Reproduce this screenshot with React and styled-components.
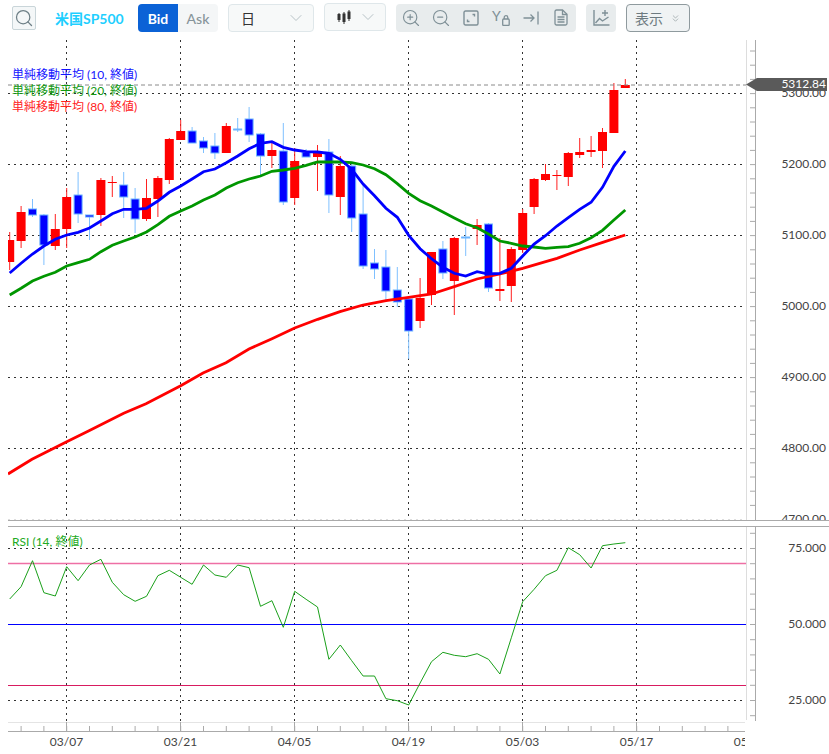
import React from 'react';
import styled, { createGlobalStyle } from 'styled-components';
import { Search, ZoomIn, ZoomOut, ChevronDown, ChevronsDown } from 'lucide-react';

const GlobalStyle = createGlobalStyle`
  html, body {
    margin: 0;
    padding: 0;
    background: #fff;
  }
  body {
    font-family: Lato, "Noto Sans CJK JP", sans-serif;
  }
`;

const Page = styled.div`
  width: 829px;
  height: 754px;
  overflow: hidden;
  background: #fff;
`;

const Toolbar = styled.div`
  display: flex;
  align-items: center;
  gap: 10px;
  height: 36px;
  margin-bottom: 4px;
  padding-left: 12px;
`;

const SearchButton = styled.button`
  display: flex;
  align-items: center;
  justify-content: center;
  width: 24px;
  height: 24px;
  padding: 0;
  border: 1px solid #c9d5d9;
  border-radius: 2px;
  background: #f4f7f8;
  color: #6d7f86;
`;

const Title = styled.div`
  width: 69px;
  margin: 0 4px 0 9px;
  font-size: 14px;
  font-weight: 700;
  color: #1fcfff;
  white-space: nowrap;
`;

const Segment = styled.div`
  display: flex;
  height: 28px;
  border-radius: 4px;
  overflow: hidden;
`;

const SegmentItem = styled.div`
  display: flex;
  align-items: center;
  justify-content: center;
  width: 40px;
  font-size: 14px;
  font-weight: ${(p) => (p.$active ? 700 : 500)};
  background: ${(p) => (p.$active ? '#0b62d6' : '#f4f6f7')};
  color: ${(p) => (p.$active ? '#fff' : '#87949a')};
`;

const Select = styled.div`
  display: flex;
  align-items: center;
  justify-content: space-between;
  box-sizing: border-box;
  width: ${(p) => p.$width}px;
  height: 28px;
  margin-top: ${(p) => p.$lift || 0}px;
  padding: 0 7px 0 12px;
  border: 1px solid #dfe7ea;
  border-radius: 4px;
  background: #f7f9f9;
  color: #b8c3c7;
`;

const SelectText = styled.span`
  font-size: 14px;
  color: #333;
`;

const IconGroup = styled.div`
  display: grid;
  grid-template-columns: repeat(${(p) => p.$count}, 30px);
  height: 28px;
  border-radius: 4px;
  background: #e8eced;
  color: #7f9097;
`;

const IconCell = styled.div`
  display: flex;
  align-items: center;
  justify-content: center;
  padding-bottom: 1px;
`;

const YLock = styled.div`
  display: flex;
  align-items: flex-start;
  justify-content: space-between;
  width: 18px;
  height: 16px;
`;

const YMark = styled.span`
  font-size: 14px;
  line-height: 11px;
`;

const LockSvg = styled.svg`
  align-self: flex-end;
  width: 8px;
  height: 11px;
`;

const ShowButton = styled.button`
  display: flex;
  align-items: center;
  gap: 7px;
  box-sizing: border-box;
  width: 64px;
  height: 28px;
  padding: 0 0 0 8px;
  border: 1px solid #8f9a9e;
  border-radius: 4px;
  background: #f0f3f4;
  font-family: Lato, "Noto Sans CJK JP", sans-serif;
  font-size: 14px;
  color: #6d7a80;
`;

const ChartWrap = styled.div`
  position: relative;
  width: 829px;
  height: 714px;
`;

const ChartSvg = styled.svg`
  display: block;
  width: 829px;
  height: 714px;
`;

const AxisLabel = styled.text`
  font-family: Lato, sans-serif;
  font-size: 12px;
  fill: ${(p) => p.$fill || '#444'};
  text-anchor: ${(p) => p.$anchor || 'end'};
`;

const Legend = styled.div`
  position: absolute;
  left: 12px;
  top: ${(p) => p.$top}px;
  display: flex;
  flex-direction: column;
  font-size: 12px;
  line-height: 16px;
`;

const LegendItem = styled.span`
  color: ${(p) => p.$color};
  white-space: nowrap;
`;

// [up, high, bodyTop, bodyBottom, low]
const candles = [
  [1, 232, 240, 262, 270], [1, 206, 212, 241, 248], [0, 199, 209, 215, 217], [0, 214, 215, 245, 265],
  [1, 214, 229, 246, 250], [1, 188, 197, 229, 248], [0, 172, 195, 214, 223], [0, 215, 215, 217, 240],
  [1, 178, 180, 215, 226], [1, 176, 182, 183, 197], [0, 172, 185, 197, 218], [0, 188, 199, 219, 233],
  [1, 179, 198, 219, 221], [1, 176, 178, 199, 217], [1, 138, 139, 180, 184], [1, 120, 131, 140, 140],
  [0, 127, 131, 143, 143], [0, 137, 141, 148, 153], [0, 133, 146, 153, 159], [1, 123, 126, 153, 153],
  [0, 118, 129, 130, 132], [0, 107, 119, 135, 142], [0, 133, 134, 156, 175], [1, 143, 150, 156, 168],
  [0, 123, 151, 202, 205], [1, 148, 161, 198, 205], [0, 149, 152, 157, 157], [1, 145, 151, 157, 191],
  [0, 139, 152, 195, 213], [1, 156, 166, 197, 215], [0, 163, 166, 218, 232], [0, 183, 214, 266, 269],
  [0, 249, 263, 269, 279], [0, 250, 267, 291, 300], [0, 267, 290, 302, 307], [0, 297, 299, 331, 359],
  [1, 278, 298, 321, 328], [1, 252, 252, 295, 305], [0, 241, 249, 273, 279], [1, 237, 238, 281, 315],
  [0, 227, 237, 238, 256], [1, 219, 225, 229, 245], [0, 223, 224, 288, 292], [1, 238, 289, 291, 301],
  [1, 247, 249, 286, 302], [1, 209, 213, 250, 253], [1, 178, 179, 207, 214], [1, 164, 174, 180, 181],
  [1, 170, 175, 176, 190], [1, 152, 153, 177, 186], [1, 138, 152, 155, 158], [1, 136, 150, 152, 157],
  [1, 128, 132, 151, 168], [1, 83, 90, 133, 133], [1, 79, 85, 88, 88],
];

const ma10 = [
  273, 263.3, 254, 246, 239.3, 235, 232.3, 228, 221, 213.7, 209.3, 209.3, 208.3, 201, 192.3, 186, 179, 171.7, 169,
  162.7, 156, 148.7, 143.3, 141.7, 147.3, 150, 151.7, 152, 153.3, 159.3, 169.3, 184, 195.7, 208.3, 217.3, 235.3,
  248.7, 258.7, 267.3, 273.3, 276, 271.7, 274, 273.3, 268.3, 256, 244, 235.7, 226, 217.7, 209.3, 202.3, 187.3, 166.3, 151,
];

const ma20 = [
  295, 288.3, 281, 276.3, 272.3, 266, 262.7, 259.3, 251.7, 245.3, 241, 237, 232, 224.7, 216.3, 211, 206, 200, 195,
  188, 182.7, 179, 176, 171.3, 170, 168.3, 165.3, 162, 162, 162, 162.7, 165, 168.7, 174.7, 183.7, 193.3, 200.7, 206,
  212, 218, 223.7, 227.7, 234, 241, 243.3, 246, 247, 248.3, 247.3, 246.7, 243.3, 237.7, 230.3, 220, 210,
];

const ma80 = [
  [8, 474], [32, 459.3], [66.7, 441.7], [89, 430.7], [123.7, 413.3], [146, 403.7], [180.7, 385.7], [203, 373],
  [226, 362.7], [249, 349], [272, 338.7], [294.7, 328], [317.7, 319.3], [340, 311.7], [363, 305], [386, 300.7],
  [408.7, 297.3], [431.7, 294], [454.3, 286.7], [477, 279], [500, 274], [522.7, 268.3], [545.7, 261.7], [557, 258.3],
  [579.7, 250], [602.7, 242.3], [625.3, 235],
];

const rsi = [
  599, 586.7, 560.7, 592.7, 596, 566.7, 580.7, 565, 559.3, 582.3, 594.7, 601.3, 596.3, 575.7, 570.3, 577.3, 584.3,
  565, 575, 577.3, 565, 567.7, 606.3, 600.7, 627.3, 591.3, 599.3, 607, 659.3, 645, 660.7, 676, 676, 698.7, 700.7, 705,
  683, 661.7, 652.3, 655.3, 656.7, 653.7, 659.3, 674, 637.8, 601.7, 589.3, 575.7, 570.3, 547.7, 554.7, 568, 545.7, 544, 542.7,
];

const barX = (i) => 9.7 + 11.4 * i;
const toPoints = (ys) => ys.map((y, i) => `${barX(i)},${y}`).join(' ');

const range = (start, end, step) => {
  const out = [];
  for (let v = start; v <= end; v += step) out.push(v);
  return out;
};

const priceGrid = [
  { y: 93.5, label: '5300.00' },
  { y: 164.5, label: '5200.00' },
  { y: 235.5, label: '5100.00' },
  { y: 306.5, label: '5000.00' },
  { y: 377.5, label: '4900.00' },
  { y: 448.5, label: '4800.00' },
  { y: 519.5, label: '4700.00', faint: true },
];

const rsiGrid = [548.5, 700.5];

const dates = [
  { x: 66.5, label: '03/07' },
  { x: 180.5, label: '03/21' },
  { x: 294.5, label: '04/05' },
  { x: 408.5, label: '04/19' },
  { x: 522.5, label: '05/03' },
  { x: 636.5, label: '05/17' },
  { x: 750.5, label: '05/31' },
];

const Candle = ({ data, index }) => {
  const [up, high, top, bottom, low] = data;
  const x = barX(index);
  if (up) {
    return (
      <g>
        <line x1={x} x2={x} y1={high} y2={low} stroke="#ff2020" strokeWidth="1" />
        <rect x={x - 4.5} y={top} width="9" height={bottom - top} fill="#ff0000" />
      </g>
    );
  }
  return (
    <g>
      <line x1={x} x2={x} y1={high} y2={low} stroke="#7fc0ff" strokeWidth="1" />
      <rect x={x - 4} y={top} width="8" height={bottom - top} fill="#0000ff" stroke="#6db6ff" strokeWidth="1" />
    </g>
  );
};

const CandleIcon = () => (
  <svg width="14" height="16" viewBox="0 0 14 16" fill="#333" stroke="#333" strokeWidth="1">
    <line x1="2" y1="4" x2="2" y2="13" />
    <rect x="1" y="5.5" width="2" height="5" />
    <line x1="7" y1="3" x2="7" y2="15" />
    <rect x="6" y="5" width="2" height="7.5" />
    <line x1="12" y1="1" x2="12" y2="12" />
    <rect x="11" y="3" width="2" height="6.5" />
  </svg>
);

const FitIcon = () => (
  <svg width="16" height="16" viewBox="0 0 16 16" fill="none" stroke="currentColor" strokeWidth="1.4">
    <rect x="1" y="1" width="14" height="14" rx="1.5" />
    <path d="M9.5 4.5h2v2M6.5 11.5h-2v-2" />
  </svg>
);

const LockIcon = () => (
  <LockSvg viewBox="0 0 8 11" fill="none" stroke="currentColor" strokeWidth="1.3">
    <rect x="0.7" y="4" width="6.5" height="6.5" rx="1" />
    <path d="M2.2 4V2.5a1.8 1.8 0 0 1 3.6 0V4" />
  </LockSvg>
);

const ToEndIcon = () => (
  <svg width="16" height="16" viewBox="0 0 16 16" fill="none" stroke="currentColor" strokeWidth="1.3">
    <path d="M0.5 8h10M7.5 4.5 11 8l-3.5 3.5M15 1.5v13" />
  </svg>
);

const DocIcon = () => (
  <svg width="14" height="17" viewBox="0 0 14 17" fill="none" stroke="currentColor" strokeWidth="1.3">
    <path d="M2.5 1h6L13 5.2v9.3a1.5 1.5 0 0 1-1.5 1.5h-9A1.5 1.5 0 0 1 1 14.5v-12A1.5 1.5 0 0 1 2.5 1z" />
    <path d="M8.5 1v4.5H13M3.5 8h7M3.5 10.5h7M3.5 13h7" />
  </svg>
);

const AddChartIcon = () => (
  <svg width="17" height="17" viewBox="0 0 17 17" fill="none" stroke="currentColor" strokeWidth="1.4">
    <path d="M1 1v15h15.5" />
    <path d="M2.5 14 6.5 9.5l3 2.5 6-4" />
    <path d="M12 1v6M9 4h6" />
  </svg>
);

const App = () => (
  <Page>
    <GlobalStyle />
    <Toolbar>
      <SearchButton>
        <Search size={20} strokeWidth={1.5} />
      </SearchButton>
      <Title>米国SP500</Title>
      <Segment>
        <SegmentItem $active>Bid</SegmentItem>
        <SegmentItem>Ask</SegmentItem>
      </Segment>
      <Select $width={86}>
        <SelectText>日</SelectText>
        <ChevronDown size={20} strokeWidth={1.2} />
      </Select>
      <Select $width={62} $lift={-2}>
        <CandleIcon />
        <ChevronDown size={20} strokeWidth={1.2} />
      </Select>
      <IconGroup $count={6}>
        <IconCell><ZoomIn size={20} strokeWidth={1.4} /></IconCell>
        <IconCell><ZoomOut size={20} strokeWidth={1.4} /></IconCell>
        <IconCell><FitIcon /></IconCell>
        <IconCell>
          <YLock>
            <YMark>Y</YMark>
            <LockIcon />
          </YLock>
        </IconCell>
        <IconCell><ToEndIcon /></IconCell>
        <IconCell><DocIcon /></IconCell>
      </IconGroup>
      <IconGroup $count={1}>
        <IconCell><AddChartIcon /></IconCell>
      </IconGroup>
      <ShowButton>
        表示
        <ChevronsDown size={11} strokeWidth={1.5} color="#8f9a9e" />
      </ShowButton>
    </Toolbar>

    <ChartWrap>
      <ChartSvg viewBox="0 40 829 714">
        <defs>
          <clipPath id="plot-clip"><rect x="8" y="40" width="738" height="480" /></clipPath>
          <clipPath id="price-clip"><rect x="757" y="40" width="72" height="480" /></clipPath>
          <clipPath id="date-clip"><rect x="8" y="732" width="737" height="22" /></clipPath>
        </defs>

        {/* grid, main pane */}
        {priceGrid.map((g) => (
          <line key={g.y} x1="8" x2="746" y1={g.y} y2={g.y} stroke={g.faint ? '#ddd' : '#333'} strokeDasharray="2 4" />
        ))}
        {dates.slice(0, 6).map((d) => (
          <g key={d.x}>
            <line x1={d.x} x2={d.x} y1="40" y2="520" stroke="#333" strokeDasharray="2 4" />
            <line x1={d.x} x2={d.x} y1="527" y2="722" stroke="#333" strokeDasharray="2 4" />
          </g>
        ))}

        {/* candles and moving averages */}
        <g clipPath="url(#plot-clip)">
          {candles.map((c, i) => <Candle key={i} data={c} index={i} />)}
          <polyline points={ma80.map((p) => p.join(',')).join(' ')} fill="none" stroke="#ff0000" strokeWidth="2.8" />
          <polyline points={toPoints(ma20)} fill="none" stroke="#009600" strokeWidth="2.8" />
          <polyline points={toPoints(ma10)} fill="none" stroke="#0000ff" strokeWidth="2.8" />
        </g>

        {/* current price */}
        <line x1="8" x2="746" y1="85" y2="85" stroke="#8a8a8a" strokeDasharray="4 3" />

        {/* price axis */}
        <line x1="746.5" x2="746.5" y1="40" y2="520" stroke="#ddd" />
        <line x1="755.5" x2="755.5" y1="40" y2="520" stroke="#aaa" />
        {range(51, 519, 14.2).map((y) => (
          <line key={y} x1="750" x2="755" y1={y} y2={y} stroke="#aaa" />
        ))}
        <g clipPath="url(#price-clip)">
          {priceGrid.map((g) => (
            <AxisLabel key={g.y} x="826" y={g.y + 3.5}>{g.label}</AxisLabel>
          ))}
        </g>
        <polygon points="746,84.5 757,78 827,78 827,91 757,91" fill="#5a5a5a" />
        <AxisLabel x="826" y="88" $fill="#fff">5312.84</AxisLabel>

        {/* pane separators */}
        <line x1="8" x2="829" y1="520.5" y2="520.5" stroke="#aaa" />
        <line x1="8" x2="829" y1="526.5" y2="526.5" stroke="#aaa" />

        {/* RSI pane */}
        {rsiGrid.map((y) => (
          <line key={y} x1="8" x2="746" y1={y} y2={y} stroke="#333" strokeDasharray="2 4" />
        ))}
        <line x1="8" x2="746" y1="563.5" y2="563.5" stroke="#ee6fa5" strokeWidth="1.5" />
        <line x1="8" x2="746" y1="624.5" y2="624.5" stroke="#0000ff" />
        <line x1="8" x2="746" y1="685.5" y2="685.5" stroke="#d81b60" />
        <polyline points={toPoints(rsi)} fill="none" stroke="#1aa01a" strokeWidth="1" />

        <line x1="746.5" x2="746.5" y1="527" y2="720" stroke="#ddd" />
        <line x1="755.5" x2="755.5" y1="527" y2="721" stroke="#aaa" />
        {range(533.3, 716, 15.2).map((y) => (
          <line key={y} x1="750" x2="755" y1={y} y2={y} stroke="#aaa" />
        ))}
        <AxisLabel x="826" y="552">75.000</AxisLabel>
        <AxisLabel x="826" y="628">50.000</AxisLabel>
        <AxisLabel x="826" y="704">25.000</AxisLabel>

        {/* date axis */}
        <line x1="8" x2="745" y1="722.5" y2="722.5" stroke="#e4e4e4" />
        <line x1="8" x2="745" y1="731.5" y2="731.5" stroke="#aaa" />
        {range(21.1, 745, 22.8).map((x) => (
          <line key={x} x1={x} x2={x} y1="726" y2="731" stroke="#aaa" />
        ))}
        {dates.slice(0, 6).map((d) => (
          <line key={d.x} x1={d.x} x2={d.x} y1="722" y2="731" stroke="#aaa" />
        ))}
        <g clipPath="url(#date-clip)">
          {dates.map((d) => (
            <AxisLabel key={d.x} x={d.x} y="746" $anchor="middle">{d.label}</AxisLabel>
          ))}
        </g>
      </ChartSvg>

      <Legend $top={27}>
        <LegendItem $color="#1515ff">単純移動平均 (10, 終値)</LegendItem>
        <LegendItem $color="#119911">単純移動平均 (20, 終値)</LegendItem>
        <LegendItem $color="#ff2222">単純移動平均 (80, 終値)</LegendItem>
      </Legend>
      <Legend $top={494}>
        <LegendItem $color="#22aa22">RSI (14, 終値)</LegendItem>
      </Legend>
    </ChartWrap>
  </Page>
);

export default App;
